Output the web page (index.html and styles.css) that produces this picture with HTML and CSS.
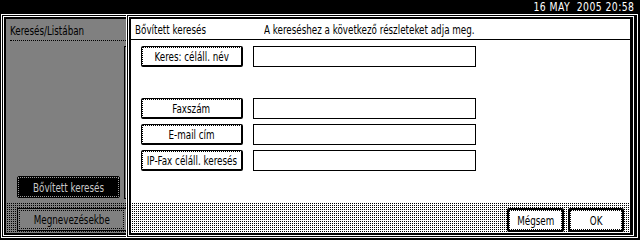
FILE: index.html
```html
<!DOCTYPE html>
<html>
<head>
<meta charset="utf-8">
<link rel="stylesheet" href="styles.css">
</head>
<body>
<div class="top"><span class="clock">16 MAY  2005 20:58</span></div>
<div class="screen">
  <div class="side">
    <div class="side-in">
      <div class="side-body">
        <div class="side-head"><span class="tx">Keresés/Listában</span></div>
        <div class="side-mid">
          <div class="side-list"><div class="btn-dark"><span class="tx tc">Bővített keresés</span></div></div>
          <div class="side-tab"></div>
        </div>
        <div class="side-foot"><div class="btn-gray"><span class="tx tc">Megnevezésekbe</span></div></div>
      </div>
    </div>
  </div>
  <div class="dlg">
    <div class="dlg-in">
      <div class="dlg-body">
        <div class="dlg-head"><span class="dlg-title"><span class="tx">Bővített keresés</span></span><span class="tx">A kereséshez a következő részleteket adja meg.</span></div>
        <div class="form">
          <div class="row"><div class="btn"><span class="tx tc">Keres: céláll. név</span></div><div class="field"></div></div>
          <div class="row"></div>
          <div class="row"><div class="btn"><span class="tx tc">Faxszám</span></div><div class="field"></div></div>
          <div class="row"><div class="btn"><span class="tx tc">E-mail cím</span></div><div class="field"></div></div>
          <div class="row"><div class="btn"><span class="tx tc">IP-Fax céláll. keresés</span></div><div class="field"></div></div>
        </div>
        <div class="dlg-foot">
          <div class="btn btn-strong btn-cancel"><span class="tx tc">Mégsem</span></div>
          <div class="btn btn-strong btn-ok"><span class="tx tc">OK</span></div>
        </div>
      </div>
    </div>
  </div>
</div>
</body>
</html>
```
FILE: styles.css
```css
* { box-sizing: border-box; }
html, body { margin: 0; padding: 0; }
body {
  width: 640px;
  height: 240px;
  background: #000;
  overflow: hidden;
  font-family: "DejaVu Sans Condensed", "DejaVu Sans", sans-serif;
  font-stretch: condensed;
  font-size: 12.5px;
  color: #000;
}
.tx {
  display: inline-block;
  white-space: nowrap;
  transform: scaleX(0.78);
  transform-origin: left center;
}
.tc { transform-origin: center center; }
.top {
  height: 14px;
  display: flex;
  justify-content: flex-end;
  padding-right: 6px;
}
.clock {
  color: #fff;
  white-space: pre;
  font-size: 12px;
  line-height: 14px;
  letter-spacing: 0.5px;
  display: inline-block;
  transform: scaleX(0.86);
  transform-origin: right center;
}
.screen {
  height: 226px;
  display: flex;
  align-items: flex-start;
}
/* left panel */
.side {
  width: 125px;
  height: 224px;
  margin-left: 1px;
  border: 1px solid #fff;
  border-right: none;
  padding: 1px 0 1px 1px;
  background: #000;
}
.side-in {
  height: 100%;
  border: 1px solid #fff;
  border-right: none;
}
.side-body {
  height: 100%;
  border: 2px solid #000;
  border-right: none;
  background: #808080;
  display: flex;
  flex-direction: column;
}
.side-head {
  height: 22px;
  margin-left: 4px;
  padding-top: 2px;
  border-bottom: 1px dotted #000;
  line-height: 20px;
  white-space: nowrap;
}
.side-mid {
  flex: 1;
  display: flex;
}
.side-list {
  flex: 1;
  display: flex;
  flex-direction: column;
  justify-content: flex-end;
  padding: 0 0 5px 11px;
}
.btn-dark {
  width: 103px;
  height: 22px;
  background: #000;
  color: #c8c8c8;
  border: 1px solid #000;
  outline: 1px dotted #9a9a9a;
  outline-offset: -2px;
  border-radius: 2px;
  display: flex;
  align-items: center;
  justify-content: center;
  white-space: nowrap;
}
.side-tab {
  width: 2px;
  margin: 5px 0 4px;
  border: 1px solid #000;
  border-right: none;
}
.side-foot {
  height: 30px;
  padding: 5px 0 0 11px;
  background-color: #808080;
  background-image: repeating-conic-gradient(#000 0 25%, transparent 0 100%);
  background-size: 2px 2px;
}
.btn-gray {
  height: 23px;
  background: #808080;
  border: 1px solid #000;
  border-right: none;
  outline: 1px dotted #000;
  outline-offset: -3px;
  display: flex;
  align-items: center;
  justify-content: center;
  white-space: nowrap;
}
/* dialog */
.dlg {
  width: 512px;
  height: 224px;
  margin-right: 2px;
  border: 1px solid #fff;
  padding: 1px 3px 1px 1px;
  background: #000;
}
.dlg-in {
  height: 100%;
  border: 1px solid #fff;
}
.dlg-body {
  height: 100%;
  border: 2px solid #000;
  border-right-width: 3px;
  background: #fff;
  display: flex;
  flex-direction: column;
}
.dlg-head {
  height: 21px;
  padding: 2px 0 0 4px;
  border-bottom: 1px solid #000;
  line-height: 18px;
  white-space: nowrap;
}
.dlg-title {
  display: inline-block;
  width: 129px;
}
.form {
  padding: 6px 0 0 10px;
  display: flex;
  flex-direction: column;
  gap: 5px;
}
.row {
  height: 21px;
  display: flex;
  gap: 10px;
}
.btn {
  width: 102px;
  height: 21px;
  background: #fff;
  border: 1px solid #000;
  border-right-width: 2px;
  border-bottom-width: 2px;
  border-radius: 2px;
  outline: 1px dotted #000;
  outline-offset: -2px;
  display: flex;
  align-items: center;
  justify-content: center;
  white-space: nowrap;
}
.field {
  width: 223px;
  height: 21px;
  border: 1px solid #000;
}
.dlg-foot {
  margin-top: auto;
  height: 30px;
  display: flex;
  justify-content: flex-end;
  gap: 4px;
  padding: 5px 6px 0 0;
  background-color: #fff;
  background-image: repeating-conic-gradient(#000 0 25%, transparent 0 100%);
  background-size: 2px 2px;
}
.btn-strong {
  height: 24px;
  border: 2px solid #000;
  border-radius: 2px;
  outline-offset: -3px;
}
.btn-cancel { width: 57px; }
.btn-ok { width: 56px; }
```
